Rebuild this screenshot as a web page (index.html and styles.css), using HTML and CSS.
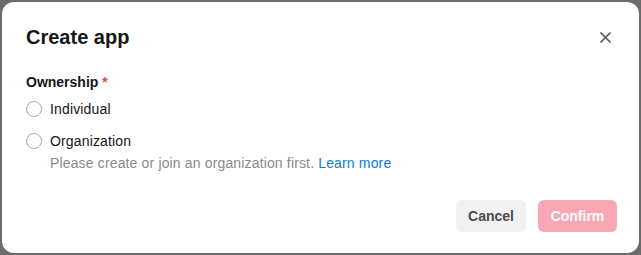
FILE: index.html
```html
<!DOCTYPE html>
<html>
<head>
<meta charset="utf-8">
<link rel="stylesheet" href="styles.css">
</head>
<body>
<div class="backdrop">
  <div class="dialog">
    <div class="header">
      <h1 class="title">Create app</h1>
      <button class="close" aria-label="Close">
        <svg width="11" height="11" viewBox="0 0 11 11"><path d="M1 1 L10 10 M10 1 L1 10" stroke="#555" stroke-width="1.7" stroke-linecap="round"/></svg>
      </button>
    </div>
    <div class="field">
      <div class="label">Ownership <span class="req">*</span></div>
      <label class="option"><span class="radio"></span><span>Individual</span></label>
      <label class="option"><span class="radio"></span><span>Organization</span></label>
      <div class="hint">Please create or join an organization first. <a class="link">Learn more</a></div>
    </div>
    <div class="footer">
      <button class="btn cancel">Cancel</button>
      <button class="btn confirm">Confirm</button>
    </div>
  </div>
</div>
</body>
</html>
```
FILE: styles.css
```css
html, body { margin: 0; padding: 0; }
body { background: #6b6b6b; font-family: "Liberation Sans", Arial, sans-serif; }
.backdrop { width: 641px; height: 255px; padding: 2px; box-sizing: border-box; }
.dialog {
  background: #fff; border-radius: 12px; height: 251px;
  padding: 0 24px; box-sizing: border-box;
  display: flex; flex-direction: column;
}
.header { display: flex; align-items: center; justify-content: space-between; height: 70px; }
.title { margin: 0; font-size: 20px; font-weight: 700; color: #161616; }
.close { border: 0; background: none; padding: 0; width: 11px; height: 11px; display: flex; margin-right: 4px; }
.field { display: flex; flex-direction: column; }
.label { font-size: 14px; font-weight: 700; color: #161616; height: 20px; line-height: 20px; margin-bottom: 1px; }
.req { color: #f5424f; }
.option { display: flex; align-items: center; gap: 8px; font-size: 14px; letter-spacing: 0.15px; color: #161616; height: 32px; }
.radio { width: 14px; height: 14px; border: 1px solid #a8a8a8; border-radius: 50%; }
.hint { font-size: 14px; letter-spacing: 0.15px; color: #8a8a8a; margin-left: 24px; line-height: 20px; margin-top: -4px; }
.link { color: #0a7de0; }
.footer { display: flex; justify-content: flex-end; gap: 12px; margin-top: 27px; margin-right: -2px; }
.btn { border: 0; border-radius: 6px; height: 32px; font-family: inherit; font-size: 14px; font-weight: 700; padding: 0 12px; }
.cancel { background: #f1f1f1; color: #4c4c4c; width: 70px; margin-left: 1px; }
.confirm { background: #f9a7b4; color: #fff; width: 79px; }
```
